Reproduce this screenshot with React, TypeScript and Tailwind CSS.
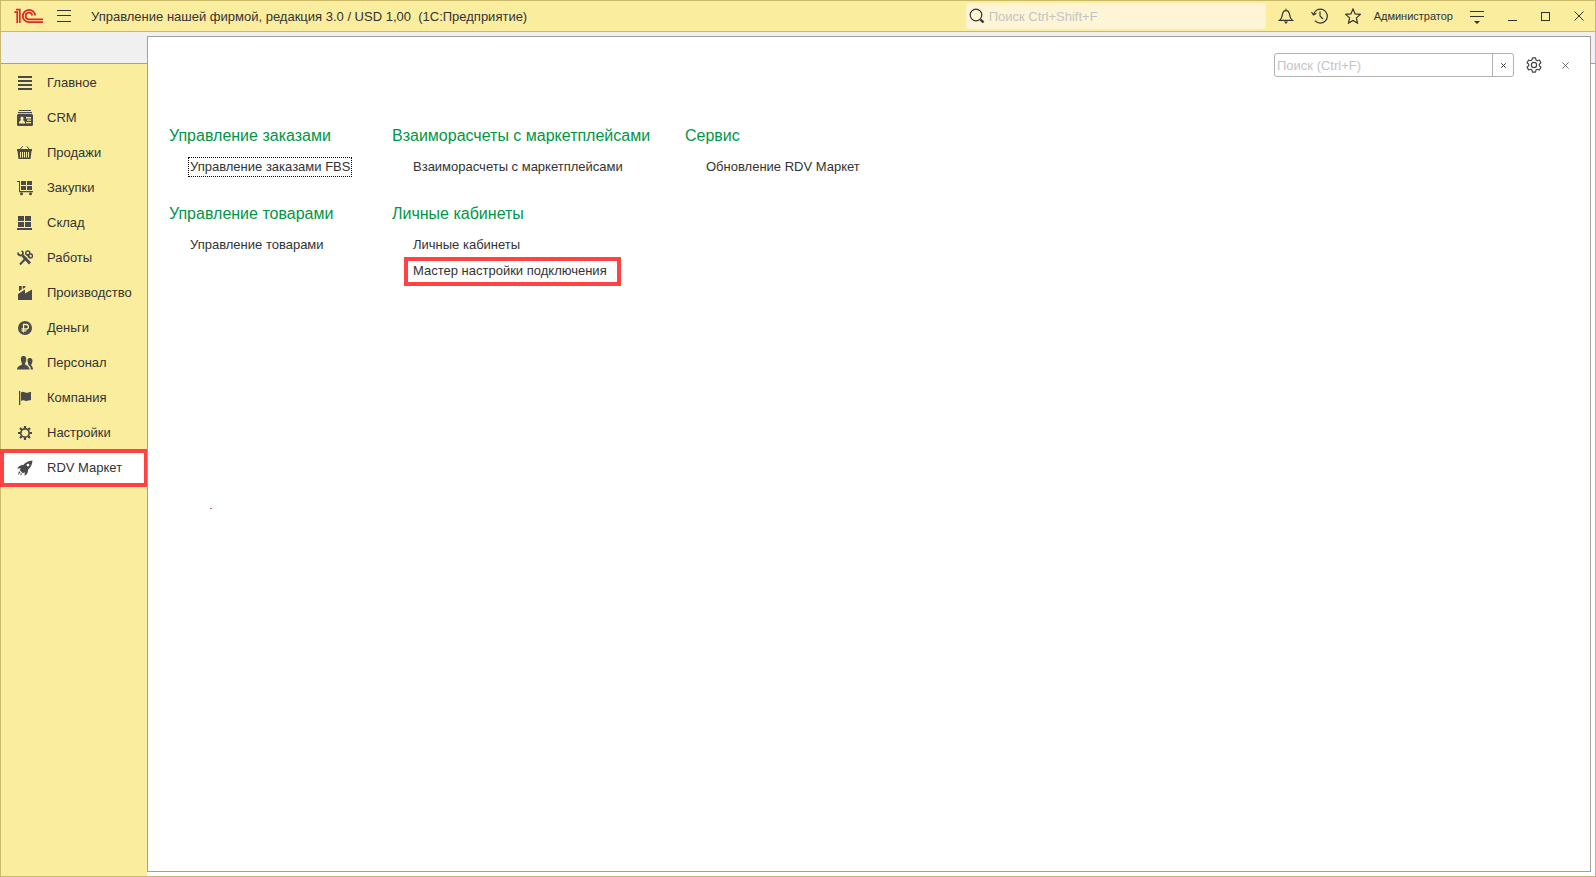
import React from 'react';
import clsx from 'clsx';

type IconProps = { className?: string };

const Logo1C = () => (
  <svg width="30" height="16" viewBox="0 0 30 16" fill="none" stroke="#dd2a22">
    <path d="M.3 4.200h2.900V15M2 1.600h3.800V15" strokeWidth="1.700" />
    <path d="M21.200 7.500A6.200 6.200 0 1 0 15 14.200H29" strokeWidth="1.800" />
    <path d="M18.200 7.500A3.300 3.300 0 1 0 15 11.300H29" strokeWidth="1.700" />
  </svg>
);

const MainIcon = () => (
  <svg width="16" height="16" viewBox="0 0 16 16" fill="#4a4a4a">
    <path d="M1 1h14v2H1zM1 5h14v2H1zM1 9h14v2H1zM1 13h14v2H1z" />
  </svg>
);

const CrmIcon = () => (
  <svg width="16" height="16" viewBox="0 0 16 16" fill="#4a4a4a">
    <path d="M2 0h12v1H2zM1 2h14v1.200H1z" />
    <path
      fillRule="evenodd"
      d="M0 5.500Q0 4 1.500 4h13Q16 4 16 5.500v9q0 1.500-1.500 1.500h-13Q0 16 0 14.500zM5 6.500a1.700 2 0 0 0-1 3.500L2 12v1.500h6V12l-2-2a1.700 2 0 0 0-1-3.500zM9 7v1.500h5V7zM10 9.500v1.300h4V9.500zM9 12v1.300h5V12z"
    />
  </svg>
);

const BasketIcon = () => (
  <svg width="16" height="16" viewBox="0 0 16 16" fill="#4a4a4a">
    <path d="M3 4.500l2.700-3.200M12.500 4.500L9.800 1.300" stroke="#4a4a4a" strokeWidth="1" />
    <path
      fillRule="evenodd"
      d="M0 4h15v2h-.5l-1 8h-12L.5 6H0zM3 7v5.500h1V7zM5 7v5.500h1V7zM7 7v5.500h1V7zM9 7v5.500h1V7zM11 7v5.500h1V7z"
    />
  </svg>
);

const TrolleyIcon = () => (
  <svg width="16" height="16" viewBox="0 0 16 16" fill="#4a4a4a">
    <path d="M0 1h3v10h13v1.300H2V2H0z" />
    <path d="M4 1h5v4H4zM10 1h5v4h-5zM4 6h5v4H4zM10 6h5v4h-5z" />
    <circle cx="4.500" cy="13.800" r="1.500" />
    <circle cx="13.500" cy="13.800" r="1.500" />
  </svg>
);

const WarehouseIcon = () => (
  <svg width="16" height="16" viewBox="0 0 16 16" fill="#4a4a4a">
    <path d="M1 1h6v5H1zM8 1h6v5H8zM1 7h6v5H1zM8 7h6v5H8zM0 13h15v2H0z" />
  </svg>
);

const ToolsIcon = () => (
  <svg width="16" height="16" viewBox="0 0 16 16" fill="none" stroke="#4a4a4a">
    <path d="M5.500 5.500l7.500 8" strokeWidth="2.800" />
    <path d="M1 2.500Q1 5.500 3.500 5.500T6 3Q6 1.500 4.500 1" strokeWidth="1.800" />
    <path d="M9.500 7.500L3 14.500" strokeWidth="2" />
    <circle cx="10.800" cy="3" r="2" strokeWidth="1.400" />
    <circle cx="13.500" cy="6" r="2" strokeWidth="1.400" />
    <path d="M9 4l4 3.500" strokeWidth="1.400" />
  </svg>
);

const FactoryIcon = () => (
  <svg width="16" height="16" viewBox="0 0 16 16" fill="#4a4a4a">
    <path d="M1 15V9l7-4.500v4L15 4.500V15z" />
    <path d="M2 1h2.700v3.500L2 6.200zM5.700 1H8.400v1.200L5.700 4z" />
  </svg>
);

const RubleIcon = () => (
  <svg width="16" height="16" viewBox="0 0 16 16">
    <circle cx="8" cy="8" r="7" fill="#4a4a4a" />
    <path d="M6.500 12.500v-8h2.700a2.200 2.200 0 0 1 0 4.500H4.500M4.500 10.800h5" fill="none" stroke="#fbed9e" strokeWidth="1.300" />
  </svg>
);

const PeopleIcon = () => (
  <svg width="16" height="16" viewBox="0 0 16 16" fill="#4a4a4a">
    <path d="M6.500 1C4 1 3.700 3 4 5.500c.2 1.500 1 2.500 1 3.500 0 1.500-5 1.500-5 5.500h12.500c0-4-4.500-4-4.500-5.500 0-1 1-2 1.200-3.500C9.500 3 9 1 6.500 1z" />
    <path d="M12.500 3c-1.300 0-2 .7-2 2.500 0 2 1 3 .8 4.500l1.700 1.500c.5.700.7 2 .7 3H16c0-3-1.800-3.500-1.800-4.500s1.300-2 1.300-4c0-1.800-1-3-3-3z" />
  </svg>
);

const FlagIcon = () => (
  <svg width="16" height="16" viewBox="0 0 16 16" fill="#4a4a4a">
    <path d="M2 1h1.300v14H2zM4 2.500c2-2 4 .5 6 .3 1.500-.1 2.500-.8 4-.8v8c-2 0-3 1-4.800 1C7 11 6 9.500 4 11z" />
  </svg>
);

const GearIcon = () => (
  <svg width="16" height="16" viewBox="0 0 16 16" fill="none" stroke="#4a4a4a">
    <circle cx="8" cy="8" r="4.200" strokeWidth="1.700" />
    <path
      d="M8 1v3M8 12v3M1 8h3M12 8h3M3 3l2 2M11 11l2 2M3 13l2-2M11 5l2-2"
      strokeWidth="2.200"
    />
  </svg>
);

const RocketIcon = () => (
  <svg width="16" height="16" viewBox="0 0 16 16" fill="#4a4a4a">
    <path
      fillRule="evenodd"
      d="M15.500.5C11 .8 8.500 2.500 6.300 5 4 4.800 1.500 6 .3 8.500l3.400-.3-.9 2 3 3 2-.9-.2 3.400c2.500-1.200 3.600-3.700 3.400-6 2.500-2.200 4.200-4.700 4.500-9.200zM11 3.700a1.400 1.400 0 1 1 0 2.800 1.400 1.400 0 0 1 0-2.800z"
    />
    <path d="M2 11l1.500 1.500L1 15zM4 13l1.200 1-2 1.800z" />
  </svg>
);

const SearchIcon = () => (
  <svg width="16" height="16" viewBox="0 0 16 16" fill="none" stroke="#333">
    <circle cx="7" cy="7" r="5.800" strokeWidth="1.200" />
    <path d="M11.500 11.500l3 3" strokeWidth="2.400" />
  </svg>
);

const BellIcon = () => (
  <svg width="16" height="16" viewBox="0 0 16 16" fill="none" stroke="#333" strokeWidth="1.200">
    <path d="M1.500 12.400c2-1.400 2.700-3.400 3-6C4.800 4 6 2.600 8 2.600s3.200 1.400 3.500 3.800c.3 2.600 1 4.600 3 6zM8 .8v2" />
    <path d="M6 13.500h4L8 16z" fill="#333" stroke="none" />
  </svg>
);

const HistoryIcon = () => (
  <svg width="17" height="16" viewBox="0 0 17 16" fill="none" stroke="#333" strokeWidth="1.200">
    <path d="M2.500 6.500A7 7 0 1 1 4 12.700M.5 4l2 3 3-1.800M9 3.500V8l3 3" />
  </svg>
);

const StarIcon = () => (
  <svg width="16" height="16" viewBox="0 0 16 16" fill="none" stroke="#333" strokeWidth="1.200">
    <path d="M8 1l2.100 4.900 5.200.5-3.900 3.500 1.100 5.200L8 12.400l-4.500 2.700 1.100-5.200L.7 6.400l5.200-.5z" />
  </svg>
);

const SettingsIcon = () => (
  <svg width="16" height="16" viewBox="0 0 16 16" fill="none" stroke="#444" strokeWidth="1.200" strokeLinejoin="round">
    <path d="M6.500.8h3l.5 2.100 1.300.8 2.100-.7 1.500 2.700-1.600 1.500v1.600l1.600 1.500-1.500 2.700-2.100-.7-1.300.8-.5 2.100h-3L6 13.100l-1.300-.8-2.100.7-1.500-2.700 1.600-1.500V7.200L1.100 5.700 2.600 3l2.100.7L6 2.900z" />
    <circle cx="8" cy="8" r="2.600" />
  </svg>
);

const Cross = ({ className }: IconProps) => (
  <svg className={className} viewBox="0 0 10 10" fill="none" stroke="#333">
    <path d="M.5.5l9 9M9.500.5l-9 9" />
  </svg>
);

const menu = [
  { label: 'Главное', icon: MainIcon },
  { label: 'CRM', icon: CrmIcon },
  { label: 'Продажи', icon: BasketIcon },
  { label: 'Закупки', icon: TrolleyIcon },
  { label: 'Склад', icon: WarehouseIcon },
  { label: 'Работы', icon: ToolsIcon },
  { label: 'Производство', icon: FactoryIcon },
  { label: 'Деньги', icon: RubleIcon },
  { label: 'Персонал', icon: PeopleIcon },
  { label: 'Компания', icon: FlagIcon },
  { label: 'Настройки', icon: GearIcon },
  { label: 'RDV Маркет', icon: RocketIcon, active: true },
];

type Link = { label: string; state?: 'focused' | 'marked' };
type Group = { title: string; links: Link[] };

const columns: Group[][] = [
  [
    { title: 'Управление заказами', links: [{ label: 'Управление заказами FBS', state: 'focused' }] },
    { title: 'Управление товарами', links: [{ label: 'Управление товарами' }] },
  ],
  [
    { title: 'Взаиморасчеты с маркетплейсами', links: [{ label: 'Взаиморасчеты с маркетплейсами' }] },
    {
      title: 'Личные кабинеты',
      links: [{ label: 'Личные кабинеты' }, { label: 'Мастер настройки подключения', state: 'marked' }],
    },
  ],
  [{ title: 'Сервис', links: [{ label: 'Обновление RDV Маркет' }] }],
];

const TitleBar = () => (
  <header className="flex h-[31px] shrink-0 items-center border-b border-[#c8b96b] bg-[#fbed9e] pr-[11px] pl-[13px]">
    <Logo1C />
    <button aria-label="Меню" className="ml-[13px]">
      <svg width="14" height="12" viewBox="0 0 14 12" fill="#333">
        <path d="M0 0h14v1H0zM0 5h14v1H0zM0 11h14v1H0z" />
      </svg>
    </button>
    <h1 className="ml-5 pt-0.5 whitespace-pre text-[13px]">
      {'Управление нашей фирмой, редакция 3.0 / USD 1,00  (1С:Предприятие)'}
    </h1>
    <label className="ml-auto flex h-[26px] w-[300px] items-center gap-1 rounded-sm bg-[#fdf5d6] pl-[3px]">
      <SearchIcon />
      <input
        type="text"
        aria-label="Глобальный поиск"
        placeholder="Поиск Ctrl+Shift+F"
        className="min-w-0 flex-1 bg-transparent pt-0.5 text-[13px] outline-none placeholder:text-[#c4c4c4]"
      />
    </label>
    <div className="ml-3 flex items-center gap-[17px]">
      <button aria-label="Уведомления"><BellIcon /></button>
      <button aria-label="История"><HistoryIcon /></button>
      <button aria-label="Избранное"><StarIcon /></button>
    </div>
    <button className="ml-[13px] text-[11px]">Администратор</button>
    <button aria-label="Сервис и настройки" className="ml-[17px] pt-0.5">
      <svg width="14" height="13" viewBox="0 0 14 13" fill="#333">
        <path d="M0 0h14v1H0zM0 5h14v1H0zM4 10h6l-3 3z" />
      </svg>
    </button>
    <div className="ml-6 flex items-center gap-6">
      <button aria-label="Свернуть" className="h-[10px] w-[9px] border-b border-[#333]" />
      <button aria-label="Развернуть" className="h-[9px] w-[9px] border border-[#333]" />
      <button aria-label="Закрыть"><Cross className="h-[10px] w-[10px]" /></button>
    </div>
  </header>
);

const Sidebar = () => (
  <aside className="flex w-[146px] shrink-0 flex-col">
    <div className="h-8 border-b border-[#a0a0a0] bg-[#f0f0f0]" />
    <nav className="flex-1 bg-[#fbed9e] pt-px">
      {menu.map(({ label, icon: Icon, active }) => (
        <a
          key={label}
          href="#"
          className={clsx(
            'flex items-center gap-[14px]',
            active ? 'relative -m-px h-[38px] border-4 border-[#ff4343] bg-white pl-[13px]' : 'h-[35px] pl-4',
          )}
        >
          <Icon />
          {label}
        </a>
      ))}
    </nav>
  </aside>
);

const SectionLink = ({ label, state }: Link) => (
  <a
    href="#"
    className={clsx(
      'relative flex h-[26px] items-center whitespace-nowrap',
      state === 'focused' && "before:absolute before:-inset-x-0.5 before:inset-y-[3px] before:border before:border-dotted before:border-black before:content-['']",
      state === 'marked' && "before:absolute before:-left-[9px] before:-right-[14px] before:-top-px before:-bottom-0.5 before:border-4 before:border-[#ff4343] before:content-['']",
    )}
  >
    {label}
  </a>
);

const Panel = () => (
  <main className="relative mt-1 mr-1 mb-1 flex-1 border border-[#a0a0a0] bg-white">
    <div className="flex items-center justify-end pt-4 pr-[21px]">
      <div className="flex h-6 w-[240px] overflow-hidden rounded-[3px] border border-[#b0b0b0]">
        <input
          type="text"
          aria-label="Поиск"
          placeholder="Поиск (Ctrl+F)"
          className="min-w-0 flex-1 pt-0.5 pl-0.5 outline-none placeholder:text-[#c4c4c4]"
        />
        <button aria-label="Очистить" className="flex w-[21px] items-center justify-center border-l border-[#b0b0b0]">
          <Cross className="h-[5px] w-[5px] stroke-2" />
        </button>
      </div>
      <button aria-label="Настройка" className="ml-3"><SettingsIcon /></button>
      <button aria-label="Закрыть панель" className="ml-5"><Cross className="h-[7px] w-[7px]" /></button>
    </div>
    <div className="mt-[47px] ml-[21px] grid grid-cols-[223px_293px_auto] justify-start">
      {columns.map((groups, i) => (
        <div key={i} className="flex flex-col gap-[22px]">
          {groups.map((group) => (
            <section key={group.title}>
              <h2 className="mb-1.5 text-[16px] leading-6 whitespace-nowrap text-[#009646]">{group.title}</h2>
              <div className="flex flex-col items-start pl-[21px]">
                {group.links.map((link) => (
                  <SectionLink key={link.label} {...link} />
                ))}
              </div>
            </section>
          ))}
        </div>
      ))}
    </div>
    <span className="absolute top-[471px] left-[62px] h-px w-0.5 bg-[#d94a55]" />
  </main>
);

const App: React.FC = () => (
  <div className="flex min-h-screen flex-col border border-[#c8b96b] bg-white font-['Liberation_Sans',Arial,sans-serif] text-[13px] text-[#333]">
    <TitleBar />
    <div className="flex flex-1 bg-[linear-gradient(#f0f0f0_31px,#a0a0a0_31px,#a0a0a0_32px,#fff_32px)]">
      <Sidebar />
      <Panel />
    </div>
  </div>
);

export default App;
